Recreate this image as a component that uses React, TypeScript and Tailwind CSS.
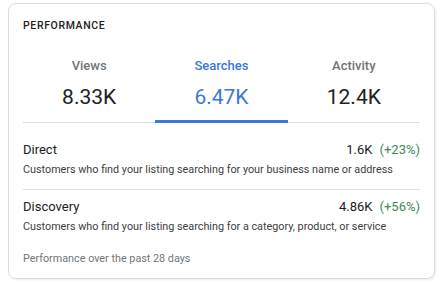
const tabs = [
  { label: 'Views', value: '8.33K', active: false },
  { label: 'Searches', value: '6.47K', active: true },
  { label: 'Activity', value: '12.4K', active: false },
];

const rows = [
  { title: 'Direct', value: '1.6K', change: '(+23%)', desc: 'Customers who find your listing searching for your business name or address' },
  { title: 'Discovery', value: '4.86K', change: '(+56%)', desc: 'Customers who find your listing searching for a category, product, or service' },
];

export default function App() {
  return (
    <div className="h-[285px] w-[441px] bg-white pl-[8px] pt-[3px] font-['Roboto',sans-serif]">
      <div className="h-[276px] w-[427px] rounded-[8px] border border-[#dadce0] px-[14px] pt-[14px] shadow-[1px_1px_2px_rgba(0,0,0,0.08)]">
        {/* Header */}
        <div className="h-[16px] text-[10.5px] leading-[16px] font-medium tracking-[0.06em] text-[#202124]">PERFORMANCE</div>

        {/* Tabs */}
        <div className="flex border-b border-[#dadce0]">
          {tabs.map((t) => (
            <div
              key={t.label}
              className={`-mb-[1px] flex flex-1 flex-col items-center pt-[23px] pb-[10px] border-b-[3px] ${t.active ? 'border-[#3b78d8]' : 'border-transparent'}`}
            >
              <div className={`h-[18px] text-[13px] leading-[18px] font-medium ${t.active ? 'text-[#3b78d8]' : 'text-[#70757a]'}`}>{t.label}</div>
              <div className={`mt-[9px] h-[26px] text-[21px] leading-[26px] ${t.active ? 'text-[#3b78d8]' : 'text-[#202124]'}`}>{t.value}</div>
            </div>
          ))}
        </div>

        {/* Rows */}
        <div className="pt-[18px]">
          {rows.map((r, i) => (
            <div key={r.title} className={i === 0 ? 'border-b border-[#e0e0e0] pb-[11px]' : 'pt-[8px]'}>
              <div className="flex h-[18px] items-center justify-between text-[13px] leading-[18px] text-[#202124]">
                <span>{r.title}</span>
                <span>
                  {r.value}
                  <span className="ml-[7px] text-[#3c8a57]">{r.change}</span>
                </span>
              </div>
              <div className="mt-[3px] h-[16px] text-[10.8px] leading-[16px] text-[#3c4043]">{r.desc}</div>
            </div>
          ))}
        </div>

        {/* Footer */}
        <div className="mt-[16px] h-[16px] text-[10.8px] leading-[16px] text-[#70757a]">Performance over the past 28 days</div>
      </div>
    </div>
  );
}
